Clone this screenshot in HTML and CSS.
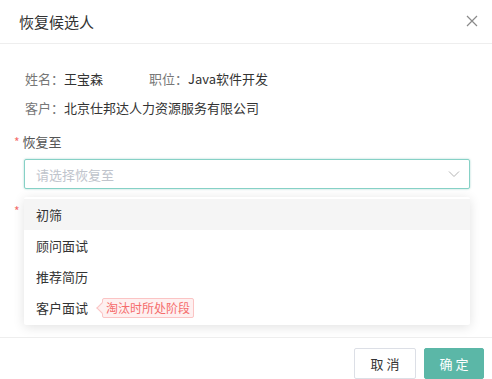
FILE: index.html
```html
<!DOCTYPE html>
<html lang="zh-CN">
<head>
  <meta charset="UTF-8">
  <meta name="viewport" content="width=device-width, initial-scale=1.0">
  <title>恢复候选人</title>
  <link rel="stylesheet" href="styles.css">
</head>
<body>
  <div class="dialog">
    <header class="dialog-header">
      <span class="dialog-title">恢复候选人</span>
      <svg class="close" width="12" height="12" viewBox="0 0 12 12">
        <path d="M1 1L11 11M11 1L1 11" stroke="#8a8a8a" stroke-width="1.2" fill="none"/>
      </svg>
    </header>

    <div class="dialog-body">
      <div class="info">
        <div class="info-row">
          <span class="info-item name"><span class="key">姓名：</span>王宝森</span>
          <span class="info-item"><span class="key">职位：</span>Java软件开发</span>
        </div>
        <div class="info-row">
          <span class="info-item"><span class="key">客户：</span>北京仕邦达人力资源服务有限公司</span>
        </div>
      </div>

      <div class="form-item">
        <label class="form-label"><i class="req">*</i>恢复至</label>
        <div class="select focused">
          <span class="placeholder">请选择恢复至</span>
          <svg class="arrow" width="12" height="8" viewBox="0 0 12 8">
            <path d="M1 1.5L6 6.5L11 1.5" stroke="#b4b4b4" stroke-width="1" fill="none"/>
          </svg>
        </div>

        <ul class="dropdown">
          <li class="option hover">初筛</li>
          <li class="option">顾问面试</li>
          <li class="option">推荐简历</li>
          <li class="option">客户面试<span class="tag">淘汰时所处阶段</span></li>
        </ul>
      </div>

      <!-- second field sits under the open dropdown; only its marker shows -->
      <div class="form-item second">
        <label class="form-label"><i class="req">*</i></label>
        <div class="select"></div>
      </div>
    </div>

    <footer class="dialog-footer">
      <button class="btn">取 消</button>
      <button class="btn primary">确 定</button>
    </footer>
  </div>
</body>
</html>
```

FILE: styles.css
```css
body {
  margin: 0;
  background: #fff;
  font-family: "Noto Sans CJK SC", "Noto Sans", sans-serif;
  color: #333;
}

.dialog {
  width: 100%;
}

.dialog-header {
  height: 43px;
  border-bottom: 1px solid #eeeeee;
  display: flex;
  align-items: center;
  justify-content: space-between;
  padding: 0 14px 0 19px;
}
.dialog-title {
  font-size: 15px;
  color: #333;
  margin-top: -1px;
}
.close {
  margin-top: -1px;
}

.dialog-body {
  height: 293px;
  padding: 0 22px 0 24px;
  box-sizing: border-box;
  overflow: hidden;
}

.info {
  padding-top: 20px;
  font-size: 13px;
}
.info-row {
  display: flex;
  height: 29px;
  align-items: center;
  padding-left: 1px;
}
.info-item {
  color: #333;
}
.info-item .key {
  color: #777;
}
.name {
  width: 124px;
}

.form-item {
  position: relative;
}
.form-label {
  display: block;
  font-size: 13px;
  color: #555;
  line-height: 20px;
  height: 20px;
  margin: 10px 0 7px -10px;
}
.second .form-label {
  margin-top: 4px;
}
.req {
  font-style: normal;
  color: #f56c6c;
  font-size: 12px;
  margin-right: 3px;
}

.select {
  height: 30px;
  border: 1px solid #dcdfe6;
  border-radius: 2px;
  box-sizing: border-box;
  display: flex;
  align-items: center;
  justify-content: space-between;
  padding: 0 9px 0 11px;
  font-size: 13px;
  margin-bottom: 12px;
}
.select.focused {
  border-color: #86d1c6;
  box-shadow: 0 0 2px rgba(90, 181, 165, 0.6);
}
.placeholder {
  color: #c0c4cc;
}

.dropdown {
  position: absolute;
  top: 65px;
  left: 0;
  right: 0;
  z-index: 2;
  margin: 0;
  padding: 2px 0;
  list-style: none;
  background: #fff;
  box-shadow: 0 2px 12px rgba(0, 0, 0, 0.12);
  border-radius: 2px;
}
.option {
  height: 31px;
  display: flex;
  align-items: center;
  padding: 0 12px;
  font-size: 13px;
  color: #333;
}
.option.hover {
  background: #f5f5f5;
}

.tag {
  position: relative;
  margin-left: 14px;
  height: 18px;
  line-height: 18px;
  padding: 0 3px;
  font-size: 12px;
  color: #f56c6c;
  background: #fef0f0;
  border: 1px solid #fbc4c4;
  border-radius: 2px;
}
.tag::before {
  content: "";
  position: absolute;
  left: -5px;
  top: 5px;
  width: 7px;
  height: 7px;
  background: #fef0f0;
  border-left: 1px solid #fbc4c4;
  border-bottom: 1px solid #fbc4c4;
  transform: rotate(45deg);
}

.dialog-footer {
  border-top: 1px solid #eeeeee;
  display: flex;
  justify-content: flex-end;
  gap: 8px;
  padding: 10px 8px 0 0;
}
.btn {
  height: 31px;
  width: 62px;
  border: 1px solid #dcdfe6;
  border-radius: 2px;
  background: #fff;
  color: #333;
  font-family: "Noto Sans CJK SC", sans-serif;
  font-size: 13px;
  padding: 0;
}
.btn.primary {
  width: 60px;
  background: #5bb7a7;
  border-color: #5bb7a7;
  color: #fff;
}
```
